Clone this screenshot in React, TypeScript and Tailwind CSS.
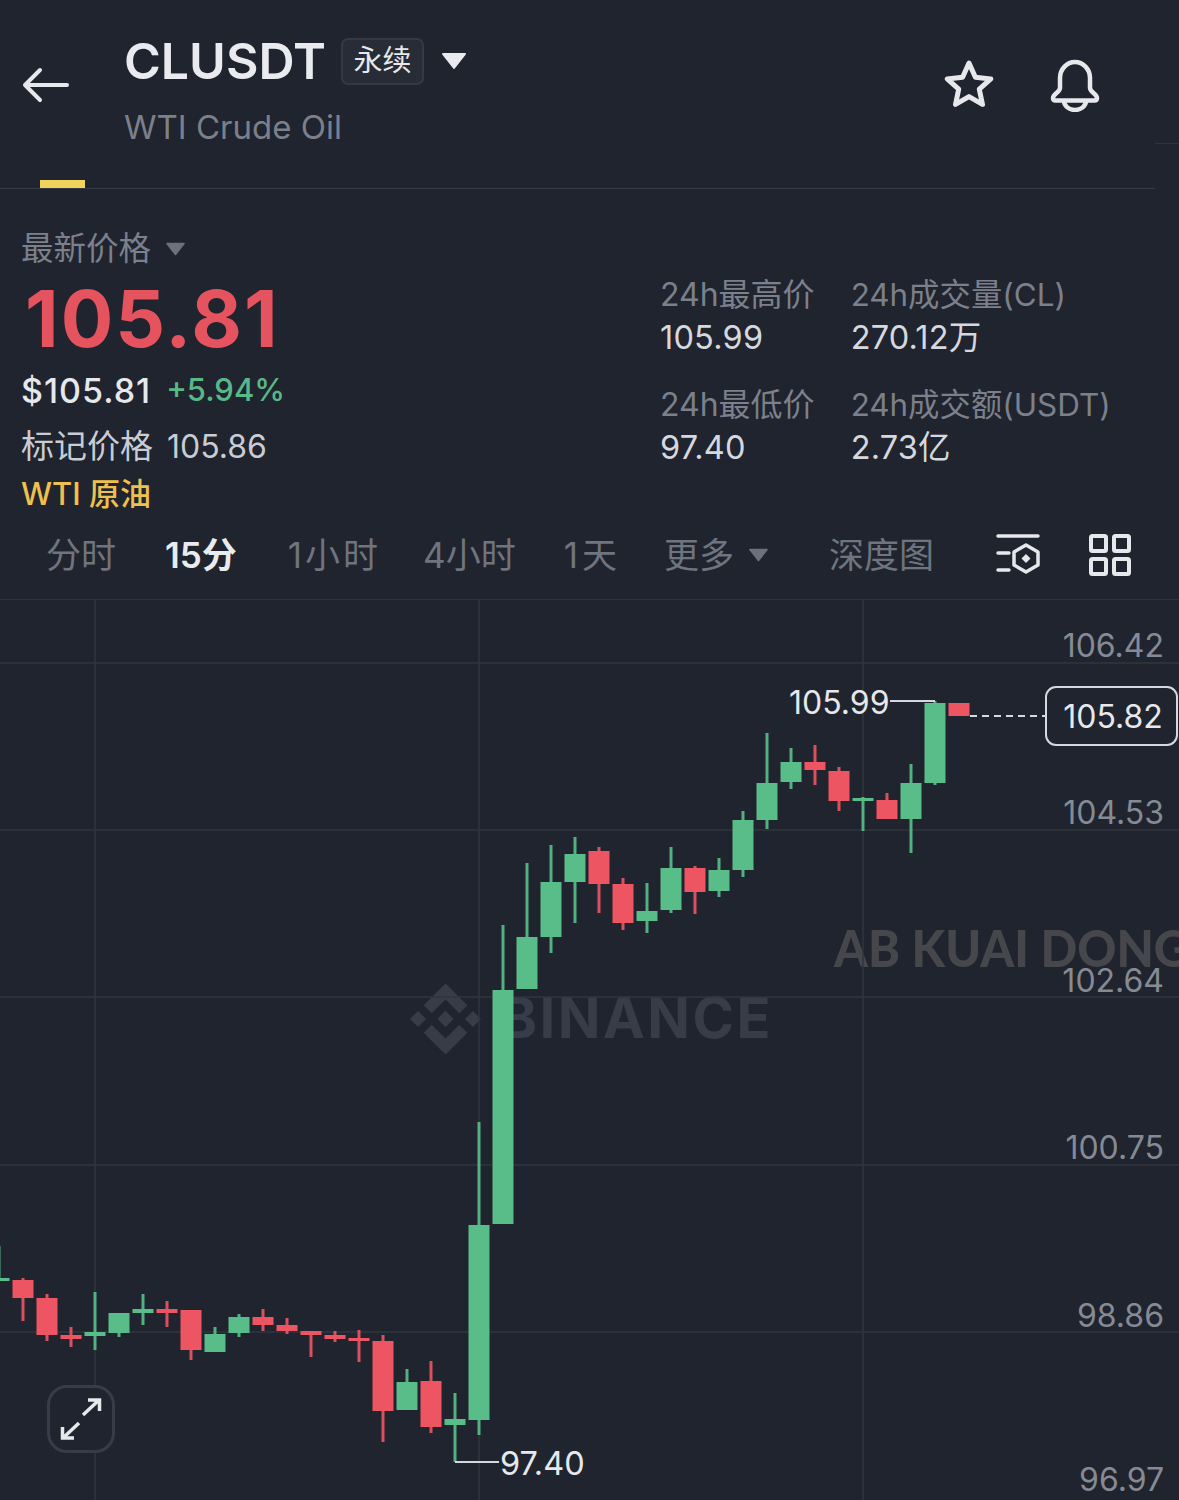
import React from 'react'

const FONT = "[font-family:Inter,'Noto_Sans_CJK_SC',sans-serif]"

// [x, bodyTop, bodyBottom, wickTop, wickBottom, green?]
type Candle = [number, number, number, number, number, boolean]
const candles: Candle[] = [
    [-1, 1278, 1281, 1246, 1281, true],
    [23, 1280, 1298, 1278, 1321, false],
    [47, 1298, 1335, 1294, 1341, false],
    [71, 1335, 1339, 1327, 1347, false],
    [95, 1332, 1336, 1292, 1350, true],
    [119, 1313, 1333, 1313, 1337, true],
    [143, 1309, 1313, 1294, 1325, true],
    [167, 1309, 1313, 1301, 1327, false],
    [191, 1310, 1350, 1310, 1360, false],
    [215, 1334, 1352, 1327, 1352, true],
    [239, 1317, 1333, 1314, 1337, true],
    [263, 1317, 1325, 1309, 1331, false],
    [287, 1325, 1331, 1318, 1334, false],
    [311, 1331, 1335, 1331, 1357, false],
    [335, 1335, 1339, 1331, 1342, false],
    [359, 1338, 1341, 1330, 1362, false],
    [383, 1341, 1411, 1335, 1442, false],
    [407, 1382, 1410, 1369, 1410, true],
    [431, 1381, 1427, 1361, 1433, false],
    [455, 1419, 1425, 1393, 1462, true],
    [479, 1225, 1420, 1122, 1435, true],
    [503, 990, 1224, 925, 1224, true],
    [527, 937, 989, 863, 989, true],
    [551, 882, 937, 845, 953, true],
    [575, 854, 882, 837, 923, true],
    [599, 851, 884, 847, 913, false],
    [623, 884, 923, 878, 930, false],
    [647, 911, 921, 883, 933, true],
    [671, 868, 910, 847, 913, true],
    [695, 868, 892, 866, 914, false],
    [719, 870, 891, 858, 897, true],
    [743, 820, 870, 811, 877, true],
    [767, 783, 820, 733, 829, true],
    [791, 762, 782, 748, 789, true],
    [815, 762, 770, 745, 785, false],
    [839, 771, 801, 767, 811, false],
    [863, 798, 801, 797, 831, true],
    [887, 800, 819, 793, 819, false],
    [911, 783, 819, 764, 853, true],
    [935, 703, 783, 701, 785, true],
    [959, 703, 716, 703, 716, false],
]

const axisLabels = [
    { text: '106.42', top: 'top-[26px]' },
    { text: '104.53', top: 'top-[193px]' },
    { text: '102.64', top: 'top-[361px]' },
    { text: '100.75', top: 'top-[528px]' },
    { text: '98.86', top: 'top-[696px]' },
    { text: '96.97', top: 'top-[860px]' },
]

function Caret({ className }: { className: string }) {
    return (
        <svg className={className} viewBox="0 0 26 18">
            <path d="M2 2h22L13 16z" fill="currentColor" stroke="currentColor" strokeWidth="2" strokeLinejoin="round" />
        </svg>
    )
}

function Stat({ label, value, wide }: { label: string; value: string; wide?: boolean }) {
    return (
        <div className="flex flex-col">
            <span className={`${wide ? 'text-[31.4px]' : 'text-[32px]'} leading-[44px] text-[#7b808b] whitespace-nowrap`}>{label}</span>
            <span className="text-[32.5px] tracking-[0.2px] leading-[42px] text-[#d5d8de] whitespace-nowrap">{value}</span>
        </div>
    )
}

export default function App() {
    return (
        <div className={`${FONT} w-[1179px] h-[1500px] bg-[#20242e] overflow-hidden flex flex-col`}>
            {/* Header */}
            <div className="relative h-[189px] flex pl-[22px] pt-[36px] shrink-0">
                <svg className="w-[48px] h-[38px] mt-[30px]" viewBox="0 0 48 38" fill="none" stroke="#e6e8ec" strokeWidth="4" strokeLinecap="round" strokeLinejoin="round">
                    <path d="M45 19H4M18 4 3 19l15 15" />
                </svg>
                <div className="ml-[54px] flex flex-col">
                    <div className="flex items-center">
                        <span className="text-[50px] leading-[50px] font-semibold text-[#e9ebef]">CLUSDT</span>
                        <span className="ml-[15px] w-[83px] h-[47px] flex items-center justify-center rounded-[7px] border-2 border-[#353944] bg-[#282c36] text-[29px] text-[#e6e8ec]">永续</span>
                        <Caret className="ml-[17px] w-[26px] h-[18px] text-[#e9ebef]" />
                    </div>
                    <span className="mt-[21px] text-[33px] leading-[40px] text-[#7b808b]">WTI Crude Oil</span>
                </div>
                <div className="ml-auto mr-[78px] mt-[22px] flex items-start gap-[54px]">
                    <svg className="w-[52px] h-[52px]" viewBox="0 0 52 52" fill="none" stroke="#e6e8ec" strokeWidth="5" strokeLinejoin="round">
                        <path d="m26 5 6.4 14.2 15.4 1.7-11.5 10.3 3.2 15.2L26 38.6l-13.5 7.8 3.2-15.2L4.2 20.9l15.4-1.7z" />
                    </svg>
                    <svg className="w-[52px] h-[54px]" viewBox="0 0 52 54" fill="none" stroke="#e6e8ec" strokeWidth="4.5" strokeLinejoin="round">
                        <path d="M11 30V20C11 11 18 4 26 4s15 7 15 16v10c0 4 7 6 7 10 0 1.500-1 2.500-2.500 2.500h-39C5 42.500 4 41.500 4 40c0-4 7-6 7-10z" />
                        <path d="M15 43c0 5 5 9 11 9s11-4 11-9" />
                    </svg>
                </div>
                <div className="absolute left-[1155px] right-0 top-[143px] h-px bg-[#2f333d]" />
                <div className="absolute left-[40px] top-[180px] w-[45px] h-[8px] bg-[#f0d35c]" />
                <div className="absolute left-0 top-[188px] w-[1155px] h-px bg-[#353944]" />
            </div>

            {/* Price and 24h stats */}
            <div className="relative h-[330px] shrink-0 flex pl-[21px] pt-[39px]">
                <div className="flex flex-col w-[639px]">
                    <div className="flex items-center h-[42px] text-[#7b808b] text-[32.5px]">
                        <span>最新价格</span>
                        <Caret className="ml-[14px] w-[21px] h-[14px] text-[#6c717c]" />
                    </div>
                    <span className="mt-[7px] ml-[4px] text-[78px] tracking-[2px] leading-[84px] font-bold text-[#e5535f]">105.81</span>
                    <div className="mt-[8px] flex items-center h-[42px]">
                        <span className="text-[34px] tracking-[1px] font-medium text-[#e6e8ec]">$105.81</span>
                        <span className="ml-[15px] text-[31px] font-medium text-[#58b988]">+5.94%</span>
                    </div>
                    <div className="mt-[15px] flex items-center h-[42px]">
                        <span className="text-[33px] text-[#c9ccd2]">标记价格</span>
                        <span className="ml-[14px] text-[32px] text-[#c9ccd2]">105.86</span>
                    </div>
                    <span className="mt-[5px] text-[31px] leading-[42px] font-medium text-[#eec04e]">WTI 原油</span>
                </div>
                <div className="pt-[45px] flex gap-[36px]">
                    <div className="flex flex-col gap-[24px]">
                        <Stat label="24h最高价" value="105.99" />
                        <Stat label="24h最低价" value="97.40" />
                    </div>
                    <div className="flex flex-col gap-[24px]">
                        <Stat wide label="24h成交量(CL)" value="270.12万" />
                        <Stat wide label="24h成交额(USDT)" value="2.73亿" />
                    </div>
                </div>
            </div>

            {/* Interval tabs */}
            <div className="h-[81px] shrink-0 border-b border-[#30343e] flex items-center pl-[46px] pb-[8px] text-[35px] text-[#6f747f]">
                <span>分时</span>
                <span className="ml-[49px] font-semibold text-[#e9ebef]">15分</span>
                <span className="ml-[51px] tracking-[3px]">1小时</span>
                <span className="ml-[42px]">4小时</span>
                <span className="ml-[48px] tracking-[4px]">1天</span>
                <span className="ml-[43px]">更多</span>
                <Caret className="ml-[14px] w-[21px] h-[14px] text-[#6c717c]" />
                <span className="ml-[60px]">深度图</span>
                <svg className="ml-[62px] w-[44px] h-[44px]" viewBox="0 0 44 44" fill="none" stroke="#e6e8ec" strokeWidth="3.500" strokeLinecap="round" strokeLinejoin="round">
                    <path d="M2 3h40M2 20h11M2 37h11" />
                    <path d="m30 12 12 7v13l-12 7-12-7V19z" />
                    <path d="m30 21 4.500 4.500L30 30l-4.500-4.500z" fill="#e6e8ec" stroke="none" />
                </svg>
                <svg className="ml-[49px] w-[42px] h-[42px]" viewBox="0 0 42 42" fill="none" stroke="#e6e8ec" strokeWidth="4" strokeLinejoin="round">
                    <rect x="2" y="2" width="15" height="15" rx="1.500" />
                    <rect x="25" y="2" width="15" height="15" rx="1.500" />
                    <rect x="2" y="25" width="15" height="15" rx="1.500" />
                    <rect x="25" y="25" width="15" height="15" rx="1.500" />
                </svg>
            </div>

            {/* Chart */}
            <div className="relative flex-1">
                <span className="absolute left-[834px] top-[317px] origin-left scale-x-[0.93] text-[52px] leading-[60px] [font-family:Lato,sans-serif] font-black text-[#46474b] whitespace-nowrap">AB KUAI DONG</span>
                <svg className="absolute left-[410px] top-[383px] w-[71px] h-[72px]" viewBox="0 0 126.61 126.61" fill="#383c46">
                    <path d="m38.73 53.2 24.59-24.58 24.6 24.6 14.3-14.31L63.32 0 24.43 38.9zM0 63.31l14.3-14.31 14.31 14.31-14.31 14.3zM38.73 73.41 63.32 98l24.6-24.6 14.31 14.29-38.9 38.92-38.9-38.9zM98 63.31l14.3-14.31 14.31 14.3-14.31 14.32zM77.83 63.3 63.32 48.78 52.59 59.51l-1.24 1.23-2.54 2.54 14.51 14.5 14.51-14.47z" />
                </svg>
                <span className="absolute left-[500px] top-[388px] text-[56px] leading-[60px] tracking-[2.500px] font-bold text-[#383c46] whitespace-nowrap">BINANCE</span>

                <svg className="absolute inset-0 w-[1179px] h-[900px]" viewBox="0 600 1179 900">
                    <g stroke="#30343e" strokeWidth="1.500">
                        <path d="M0 663H1179M0 830H1179M0 997H1179M0 1165H1179M0 1332H1179" />
                        <path d="M95 600V1500M479 600V1500M863 600V1500" />
                    </g>
                    {candles.map(([x, bodyTop, bodyBottom, wickTop, wickBottom, green]) => (
                        <g key={x} fill={green ? '#58bd88' : '#ee5563'}>
                            <rect x={x - 1.5} y={wickTop} width="3" height={wickBottom - wickTop} opacity={green ? 0.92 : 0.9} />
                            <rect x={x - 10.5} y={bodyTop} width="21" height={bodyBottom - bodyTop} />
                        </g>
                    ))}
                    <path d="M455 1462H499" stroke="#d5d8de" strokeWidth="2" />
                    <path d="M890 701H935" stroke="#d5d8de" strokeWidth="2" />
                    <path d="M970 716H1045" stroke="#d5d8de" strokeWidth="2" strokeDasharray="7 5" />
                </svg>

                {axisLabels.map((label) => (
                    <span key={label.text} className={`absolute right-[15px] ${label.top} text-[32px] leading-[40px] text-[#858a94]`}>
                        {label.text}
                    </span>
                ))}
                <span className="absolute left-[789px] top-[83px] text-[32px] leading-[40px] text-[#e6e8ec]">105.99</span>
                <span className="absolute left-[500px] top-[844px] text-[32.5px] leading-[40px] text-[#e6e8ec]">97.40</span>
                <span className="absolute left-[1045px] top-[86px] w-[133px] h-[60px] pl-[3px] pt-[2px] flex items-center justify-center rounded-[11px] border-2 border-[#d5d8de] bg-[#20242e] text-[32px] text-[#e6e8ec]">105.82</span>

                <div className="absolute left-[47px] top-[785px] w-[68px] h-[68px] rounded-[20px] border-[3px] border-[#383c46] bg-[#20242e] flex items-center justify-center">
                    <svg className="w-[44px] h-[44px]" viewBox="0 0 44 44" fill="none" stroke="#e6e8ec" strokeWidth="3.500">
                        <path d="M24 18 40 3M29 3h11.500v11M20 26 4 41M15 41H3.500V30" />
                    </svg>
                </div>
            </div>
        </div>
    )
}
